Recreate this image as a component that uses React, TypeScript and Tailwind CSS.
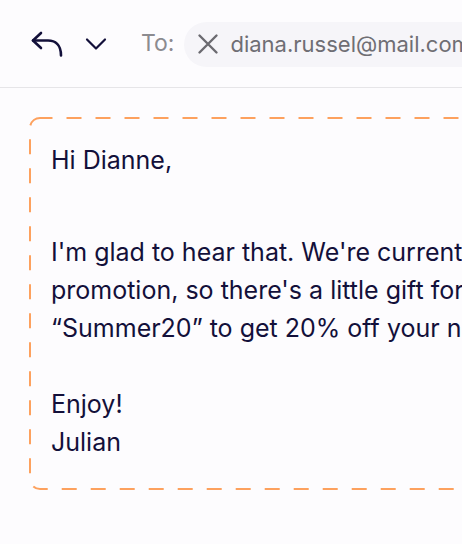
import React from "react";

export default function App() {
  return (
    <div
      className="w-[462px] h-[544px] overflow-hidden bg-[#fdfcfe] text-[#13103a]"
      style={{ fontFamily: "Inter, 'Noto Sans', sans-serif" }}
    >
      <div className="w-[760px]">
        <div className="h-[88px] border-b border-[#e6e5e8] flex items-center">
          <div className="ml-[31px] flex items-center">
            <svg width="34" height="28" viewBox="0 0 34 28" fill="none" stroke="#13103a" strokeWidth="2.6" strokeLinecap="round" strokeLinejoin="round">
              <path d="M10 3 2 10.5 10 18" />
              <path d="M2 10.5h15c7 0 13 4 13 15" />
            </svg>
          </div>
          <div className="ml-[19px] flex items-center">
            <svg width="24" height="14" viewBox="0 0 24 14" fill="none" stroke="#13103a" strokeWidth="2.2" strokeLinecap="round" strokeLinejoin="round">
              <path d="M3 2.5 12 11.5 21 2.5" />
            </svg>
          </div>
          <div className="ml-[33px] text-[23px] text-[#8c8b90]">To:</div>
          <div className="ml-[10px] mt-[1px] h-[45px] flex items-center rounded-full bg-[#f6f5f9] pl-[13px] pr-5">
            <svg width="22" height="22" viewBox="0 0 22 22" fill="none" stroke="#6b6a70" strokeWidth="2.4" strokeLinecap="round">
              <path d="M2.5 2.5 19.5 19.5M19.5 2.5 2.5 19.5" />
            </svg>
            <span className="ml-[11px] text-[22px] text-[#6f6e74] whitespace-nowrap">diana.russel@mail.com</span>
          </div>
        </div>
        <div className="relative ml-[29px] mt-[29px] w-[660px] h-[373px] pt-[24px] pl-[22px] text-[25px] leading-[38px] whitespace-nowrap">
          <svg className="absolute inset-0" width="660" height="373" fill="none">
            <rect x="1" y="1" width="658" height="371" rx="10" ry="10" stroke="#fda15e" strokeWidth="2" strokeDasharray="15 14" strokeDashoffset="2.5" />
          </svg>
          <p>Hi Dianne,</p>
          <p className="mt-[54px]">
            I'm glad to hear that. We're currently running a summer
            <br />
            promotion, so there's a little gift for you. Use the code
            <br />
            “Summer20” to get 20% off your next order.
          </p>
          <p className="mt-[38px]">
            Enjoy!
            <br />
            Julian
          </p>
        </div>
      </div>
    </div>
  );
}
